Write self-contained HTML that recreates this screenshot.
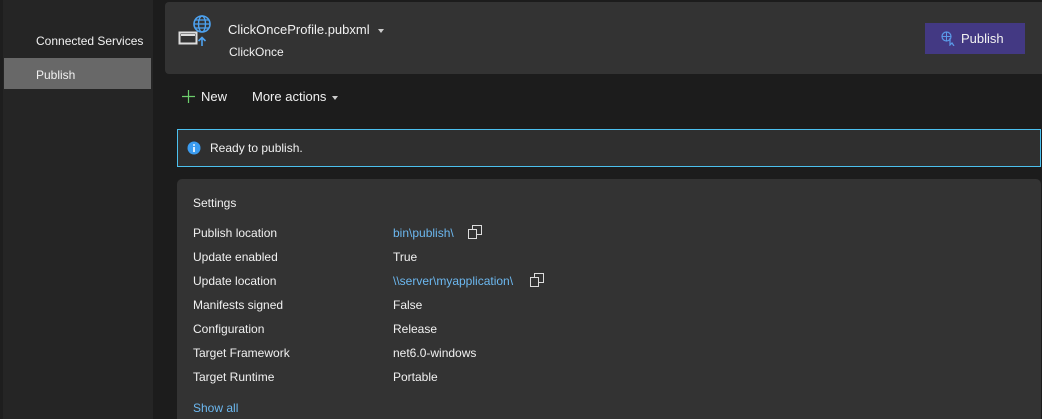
<!DOCTYPE html>
<html><head><style>
*{margin:0;padding:0;box-sizing:border-box}
html,body{width:1042px;height:419px;overflow:hidden}
body{background:#1c1c1c;font-family:"Liberation Sans",sans-serif;font-size:12px;color:#f1f1f1;position:relative}
.abs{position:absolute}
.side{left:0;top:0;width:153px;height:419px;background:#252525;border-left:3px solid #1e1e1e}
.sel{left:4px;top:58px;width:147px;height:31px;background:#686868}
.t{position:absolute;white-space:nowrap;line-height:14px}
.link{color:#6cb8f0}
.arr{display:inline-block;width:0;height:0;border-left:3.5px solid transparent;border-right:3.5px solid transparent;border-top:4px solid #ccc;vertical-align:middle;margin-left:8px}
</style></head><body>
<div class="abs side"></div>
<div class="abs sel"></div>
<div class="t" style="left:36px;top:34px">Connected Services</div>
<div class="t" style="left:36px;top:68px">Publish</div>

<div class="abs" style="left:165px;top:2px;width:877px;height:72px;background:#333;border-radius:4px 0 0 4px"></div>
<svg class="abs" style="left:178px;top:15px" width="36" height="36" viewBox="0 0 36 36">
<rect x="1.5" y="17.5" width="17" height="11" fill="#333" stroke="#ddd" stroke-width="2"/>
<rect x="3" y="19" width="14" height="2" fill="#ddd"/>
<circle cx="24" cy="9" r="8" fill="#333" stroke="#4da2f0" stroke-width="1.6"/>
<ellipse cx="24" cy="9" rx="3.5" ry="8" fill="none" stroke="#4da2f0" stroke-width="1.4"/>
<path d="M16 9h16M17.5 5h13M17.5 13h13" stroke="#4da2f0" stroke-width="1.3"/>
<path d="M24 31v-8M20.5 26l3.5-3.5 3.5 3.5" fill="none" stroke="#4da2f0" stroke-width="1.6"/>
</svg>
<div class="t" style="left:228px;top:23px;font-size:13px">ClickOnceProfile.pubxml<span class="arr"></span></div>
<div class="t" style="left:229px;top:45px">ClickOnce</div>

<div class="abs" style="left:925px;top:23px;width:100px;height:31px;background:#433983"></div>
<svg class="abs" style="left:941px;top:31px" width="15" height="15" viewBox="0 0 15 15">
<circle cx="5.5" cy="5.5" r="4.5" fill="none" stroke="#5a9ae8" stroke-width="1.2"/>
<path d="M1 5.5h9M5.5 1v9" stroke="#5a9ae8" stroke-width="1"/>
<path d="M9 7l0 7 2-2 2 3" fill="none" stroke="#5a9ae8" stroke-width="1.2"/>
</svg>
<div class="t" style="left:961px;top:32px;font-size:13px">Publish</div>

<svg class="abs" style="left:182px;top:90px" width="13" height="13"><path d="M6.5 0v13M0 6.5h13" stroke="#6ccf6c" stroke-width="1.2"/></svg>
<div class="t" style="left:201px;top:90px;font-size:13px">New</div>
<div class="t" style="left:252px;top:90px;font-size:13px">More actions<span class="arr" style="margin-left:6px"></span></div>

<div class="abs" style="left:177px;top:129px;width:864px;height:38px;background:#2f2f2f;border:1px solid #4cc0ee"></div>
<svg class="abs" style="left:187px;top:141px" width="14" height="14"><circle cx="7" cy="7" r="6.5" fill="#3b9cf0"/><rect x="6.2" y="6" width="1.6" height="5" fill="#fff"/><rect x="6.2" y="3.2" width="1.6" height="1.6" fill="#fff"/></svg>
<div class="t" style="left:210px;top:141px">Ready to publish.</div>

<div class="abs" style="left:177px;top:179px;width:864px;height:240px;background:#333;border-radius:5px 5px 0 0"></div>
<div class="t" style="left:193px;top:196px">Settings</div>
<div class="t" style="left:193px;top:226px">Publish location</div>
<div class="t link" style="left:393px;top:226px">bin\publish\</div>
<div class="t" style="left:193px;top:250px">Update enabled</div>
<div class="t" style="left:393px;top:250px">True</div>
<div class="t" style="left:193px;top:274px">Update location</div>
<div class="t link" style="left:393px;top:274px">\\server\myapplication\</div>
<div class="t" style="left:193px;top:298px">Manifests signed</div>
<div class="t" style="left:393px;top:298px">False</div>
<div class="t" style="left:193px;top:322px">Configuration</div>
<div class="t" style="left:393px;top:322px">Release</div>
<div class="t" style="left:193px;top:346px">Target Framework</div>
<div class="t" style="left:393px;top:346px">net6.0-windows</div>
<div class="t" style="left:193px;top:370px">Target Runtime</div>
<div class="t" style="left:393px;top:370px">Portable</div>
<div class="t link" style="left:193px;top:401px">Show all</div>

<svg class="abs" style="left:467px;top:225px" width="16" height="15"><path d="M5.5 0.5h9v9h-9z" fill="none" stroke="#ddd"/><rect x="1.5" y="4.5" width="8" height="9" fill="#333" stroke="#ddd"/></svg>
<svg class="abs" style="left:529px;top:273px" width="16" height="15"><path d="M5.5 0.5h9v9h-9z" fill="none" stroke="#ddd"/><rect x="1.5" y="4.5" width="8" height="9" fill="#333" stroke="#ddd"/></svg>
</body></html>
